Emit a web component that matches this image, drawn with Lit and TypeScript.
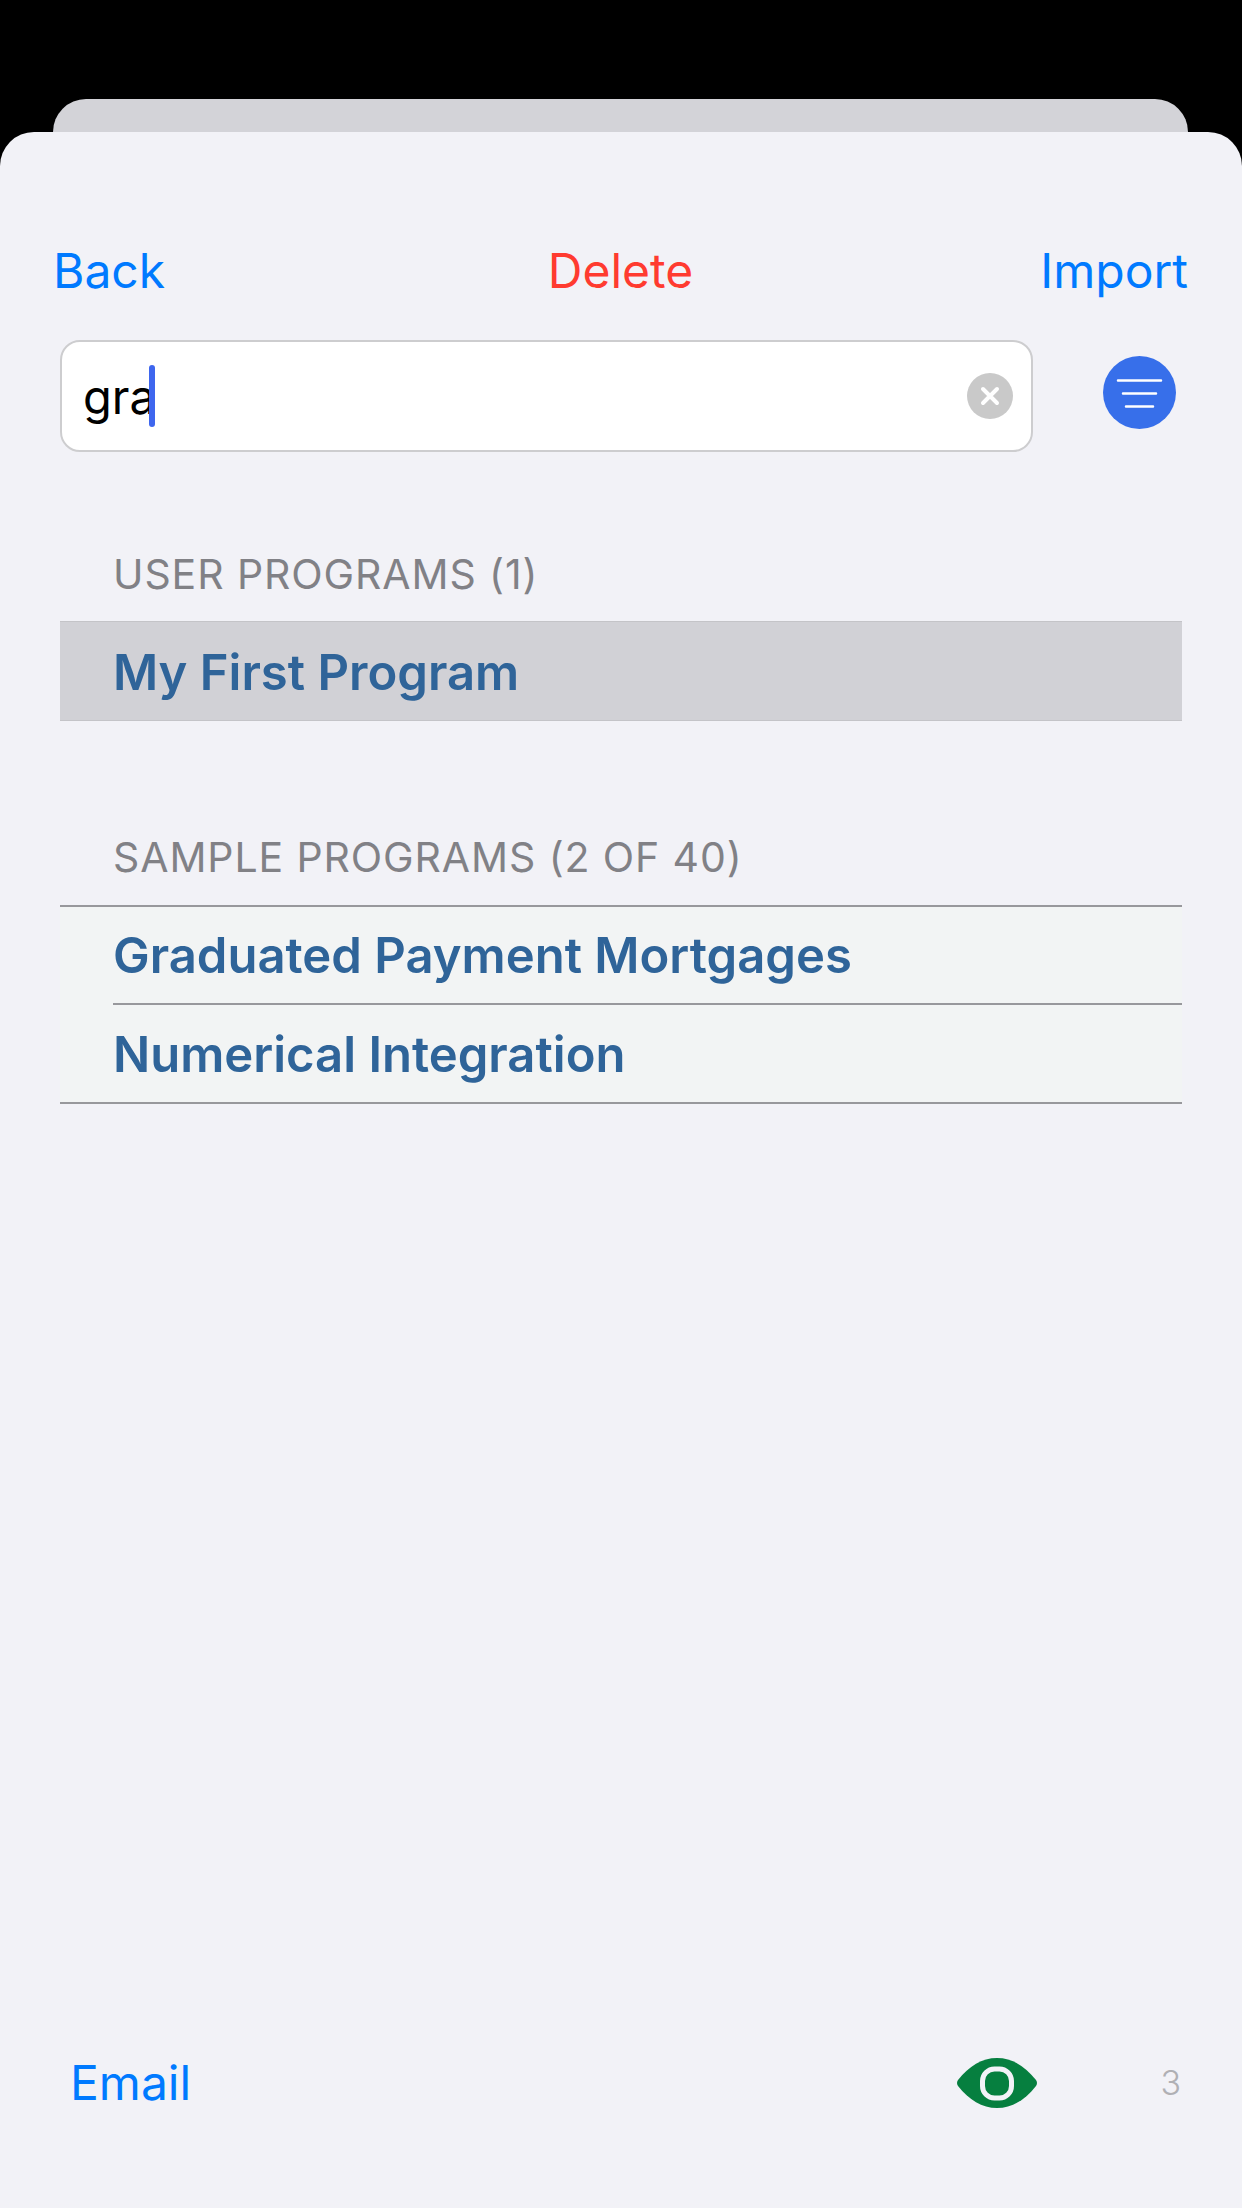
import { LitElement, css, html } from 'lit';
import { customElement } from 'lit/decorators.js';

const FONT = css`Inter, 'Liberation Sans', sans-serif`;

@customElement('app-root')
export class AppRoot extends LitElement {
  static styles = css`
    :host {
      background: #000;
      display: block;
      font-family: ${FONT};
      height: 2208px;
      overflow: hidden;
    }

    .back-card {
      background: #d3d3d8;
      border-radius: 33px 33px 0 0;
      height: 33px;
      margin: 99px 54px 0 53px;
    }

    .sheet {
      background: #f2f2f7;
      border-radius: 34px 34px 0 0;
      display: flex;
      flex-direction: column;
      height: 2076px;
    }

    .nav {
      align-items: center;
      display: grid;
      font-size: 48px;
      grid-template-columns: 1fr auto 1fr;
      height: 60px;
      margin-top: 108px;
      padding: 0 54px 0 53px;
    }

    .link {
      color: #007aff;
    }

    .delete {
      color: #ff3b30;
    }

    .import {
      text-align: right;
    }

    .search-row {
      align-items: center;
      display: flex;
      margin-top: 40px;
      padding-left: 60px;
    }

    .search {
      align-items: center;
      background: #fff;
      border: 2px solid #cdcdcf;
      border-radius: 20px;
      box-sizing: border-box;
      display: flex;
      height: 112px;
      padding: 0 18px 0 21px;
      width: 973px;
    }

    .query {
      color: #000;
      font-size: 47px;
    }

    .caret {
      background: #3e66ee;
      border-radius: 3px;
      height: 62px;
      margin-left: -7px;
      width: 6px;
    }

    .clear {
      display: block;
      margin-left: auto;
    }

    .filter {
      display: block;
      margin-left: 70px;
      position: relative;
      top: -4px;
    }

    .section-title {
      color: #818186;
      font-size: 41px;
      letter-spacing: 0.9px;
      line-height: 46px;
      padding-left: 113px;
    }

    .section-title.user {
      margin-top: 99px;
    }

    .section-title.sample {
      margin-top: 113px;
    }

    .list {
      box-sizing: border-box;
      margin: 24px 60px 0;
    }

    .selected {
      background: #d1d1d6;
      border-bottom: 1px solid #c4c4c8;
      border-top: 1px solid #c4c4c8;
    }

    .plain {
      background: #f2f4f4;
      border-bottom: 2px solid #98989c;
      border-top: 2px solid #98989c;
      margin-top: 25px;
    }

    .row {
      align-items: center;
      box-sizing: border-box;
      color: #2f6499;
      display: flex;
      font-size: 49px;
      font-weight: 600;
      height: 98px;
      margin-left: 53px;
      padding-top: 2px;
    }

    .plain .row {
      height: 96px;
      padding-top: 1px;
    }

    .plain .row + .row {
      border-top: 2px solid #98989c;
      height: 99px;
    }

    .footer {
      align-items: center;
      display: flex;
      margin-top: auto;
      padding: 0 61px 96px 70px;
    }

    .email {
      font-size: 48px;
    }

    .eye {
      display: block;
      margin-left: auto;
    }

    .count {
      color: #b0b0b4;
      font-size: 34px;
      font-weight: 300;
      margin-left: 122px;
    }
  `;

  render() {
    return html`
      <div class="back-card"></div>
      <div class="sheet">
        <div class="nav">
          <span class="link">Back</span>
          <span class="delete">Delete</span>
          <span class="link import">Import</span>
        </div>

        <div class="search-row">
          <div class="search">
            <span class="query">gra</span>
            <span class="caret"></span>
            <svg class="clear" width="46" height="46" viewBox="0 0 46 46">
              <circle cx="23" cy="23" r="23" fill="#c9c9c9" />
              <path d="M16 16 L30 30 M30 16 L16 30" stroke="#fff" stroke-width="4" stroke-linecap="round" />
            </svg>
          </div>
          <svg class="filter" width="73" height="73" viewBox="0 0 73 73">
            <circle cx="36.5" cy="36.5" r="36.5" fill="#376fea" />
            <path d="M15 24.5 H58 M20 37.5 H53 M23 50.5 H50" stroke="#fff" stroke-width="2.5" stroke-linecap="round" />
          </svg>
        </div>

        <div class="section-title user">USER PROGRAMS (1)</div>
        <div class="list selected">
          <div class="row">My First Program</div>
        </div>

        <div class="section-title sample">SAMPLE PROGRAMS (2 OF 40)</div>
        <div class="list plain">
          <div class="row">Graduated Payment Mortgages</div>
          <div class="row">Numerical Integration</div>
        </div>

        <div class="footer">
          <span class="link email">Email</span>
          <svg class="eye" width="82" height="52" viewBox="0 0 82 52">
            <path d="M2 23 C13 9 26 1 41 1 C56 1 69 9 80 23 Q82 26 80 29 C69 43 56 51 41 51 C26 51 13 43 2 29 Q0 26 2 23 Z" fill="#067f3f" />
            <rect x="26.5" y="12" width="29" height="29" rx="12" fill="none" stroke="#f2f2f7" stroke-width="5" />
          </svg>
          <span class="count">3</span>
        </div>
      </div>
    `;
  }
}

declare global {
  interface HTMLElementTagNameMap {
    'app-root': AppRoot;
  }
}
